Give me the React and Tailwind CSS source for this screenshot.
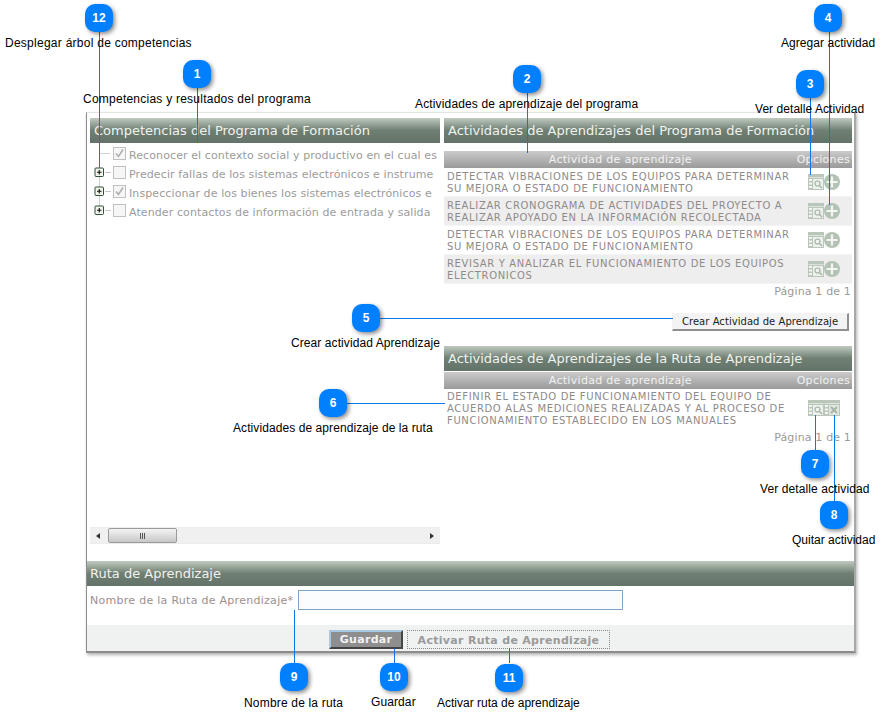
const verdana = "font-['DejaVu_Sans',Verdana,sans-serif]"

const programRows = [
  ['DETECTAR VIBRACIONES DE LOS EQUIPOS PARA DETERMINAR', 'SU MEJORA O ESTADO DE FUNCIONAMIENTO'],
  ['REALIZAR CRONOGRAMA DE ACTIVIDADES DEL PROYECTO A', 'REALIZAR APOYADO EN LA INFORMACIÓN RECOLECTADA'],
  ['DETECTAR VIBRACIONES DE LOS EQUIPOS PARA DETERMINAR', 'SU MEJORA O ESTADO DE FUNCIONAMIENTO'],
  ['REVISAR Y ANALIZAR EL FUNCIONAMIENTO DE LOS EQUIPOS', 'ELECTRONICOS'],
]

const competencias = [
  { text: 'Reconocer el contexto social y productivo en el cual es', checked: true, leaf: true },
  { text: 'Predecir fallas de los sistemas electrónicos e instrume', checked: false },
  { text: 'Inspeccionar de los bienes los sistemas electrónicos e', checked: true },
  { text: 'Atender contactos de información de entrada y salida', checked: false },
]

function DetailIcon() {
  return (
    <svg width="16" height="16" viewBox="0 0 16 16" className="shrink-0">
      <rect x="0" y="0" width="16" height="16" fill="#b9c6b9" />
      <rect x="0.5" y="3" width="15" height="0.8" fill="#e4eae4" />
      <rect x="1" y="5" width="3" height="2" fill="#f4f6f4" />
      <rect x="1" y="8.5" width="3" height="2" fill="#f4f6f4" />
      <rect x="1" y="12" width="3" height="2" fill="#f4f6f4" />
      <rect x="5" y="5" width="10" height="10" fill="#edf1ed" />
      <circle cx="9.5" cy="9.5" r="2.5" fill="none" stroke="#a4b4a4" strokeWidth="1.2" />
      <path d="M11.5 11.5l2.5 2.5" stroke="#a4b4a4" strokeWidth="1.4" />
    </svg>
  )
}

function PlusIcon() {
  return (
    <svg width="16" height="16" viewBox="0 0 16 16" className="shrink-0">
      <circle cx="8" cy="8" r="8" fill="#b4c2b4" />
      <path d="M8 2.5v11M2.5 8h11" stroke="#f4f6f4" strokeWidth="2.2" />
    </svg>
  )
}

function RemoveIcon() {
  return (
    <svg width="16" height="16" viewBox="0 0 16 16" className="shrink-0">
      <rect x="0" y="0" width="16" height="16" fill="#b9c6b9" />
      <rect x="0.5" y="3" width="15" height="0.8" fill="#e4eae4" />
      <rect x="1" y="5" width="3" height="2" fill="#f4f6f4" />
      <rect x="1" y="8.5" width="3" height="2" fill="#f4f6f4" />
      <rect x="1" y="12" width="3" height="2" fill="#f4f6f4" />
      <rect x="5" y="5" width="10" height="10" fill="#dfe6df" />
      <path d="M7 7l6 6M13 7l-6 6" stroke="#a4b4a4" strokeWidth="1.8" />
    </svg>
  )
}

function Checkbox({ checked }) {
  return (
    <span className="w-[13px] h-[13px] shrink-0 border border-[#c0c0c0] bg-[#f6f6f6] flex items-center justify-center">
      {checked && (
        <svg width="11" height="11" viewBox="0 0 11 11">
          <path d="M2 5.5l2.5 3L9 1.5" fill="none" stroke="#b0b0b0" strokeWidth="1.6" />
        </svg>
      )}
    </span>
  )
}

function TreeToggle() {
  return (
    <svg width="11" height="11" viewBox="0 0 11 11" className="relative shrink-0">
      <rect x="1" y="1" width="8.5" height="8.5" rx="1" fill="#f2f5ea" stroke="#2f4f3a" />
      <path d="M3 5.25h4.5M5.25 3v4.5" stroke="#111" strokeWidth="1.1" />
    </svg>
  )
}

function SectionHeader({ className = 'pl-[4px]', children }) {
  return (
    <div className={`h-[25px] shrink-0 bg-gradient-to-b from-[#c0cac0] via-[#6f7f72] to-[#64736a] text-[#f0f3f0] text-[13px] leading-[25px] whitespace-nowrap ${verdana} ${className}`}>
      {children}
    </div>
  )
}

function TableHeader() {
  return (
    <div className={`h-[17px] shrink-0 flex bg-gradient-to-b from-[#cbcbcb] to-[#9a9a9a] text-[#f2f2f2] text-[11px] leading-[18px] tracking-[0.3px] ${verdana}`}>
      <span className="w-[354px] text-center">Actividad de aprendizaje</span>
      <span className="flex-1 text-right pr-[2px]">Opciones</span>
    </div>
  )
}

function Pagination() {
  return (
    <div className={`text-right text-[11px] leading-[14px] text-[#9a9a9a] pr-[1px] mt-[1px] tracking-[0.15px] ${verdana}`}>Página 1 de 1</div>
  )
}

function Bubble({ className, children }) {
  return (
    <div className={`absolute w-[28px] h-[28px] rounded-[10px] bg-[#0080ff] text-white text-[12px] font-bold flex items-center justify-center shadow-[2px_2px_4px_rgba(0,0,0,0.45)] font-['Liberation_Sans',Arial,sans-serif] ${className}`}>
      {children}
    </div>
  )
}

function Label({ className, children }) {
  return (
    <div className={`absolute text-[12px] leading-[14px] text-black whitespace-nowrap font-['Liberation_Sans',Arial,sans-serif] ${className}`}>
      {children}
    </div>
  )
}

function Line({ className }) {
  return <div className={`absolute bg-[#0a78e8] ${className}`} />
}

export default function App() {
  return (
    <div className="relative w-[881px] h-[713px] bg-white overflow-hidden">
      <div className="pt-[112px] pl-[86px]">
        <div className="w-[770px] h-[541px] flex flex-col bg-white border-l border-l-[#8c8c8c] border-t border-t-[#e4e4e4] border-r-2 border-r-[#a8a8a8] border-b-2 border-b-[#8c8c8c] shadow-[1px_2px_3px_rgba(0,0,0,0.3)]">
          <div className="h-[448px] shrink-0 flex pt-[5px] pl-[3px] gap-[4px]">
            <div className="w-[350px] flex flex-col">
              <SectionHeader>Competencias del Programa de Formación</SectionHeader>
              <div className="relative mt-[1px] flex-1 flex flex-col">
                <span className="absolute left-[9px] top-[32px] h-[34px] w-px bg-[#cfcfcf]" />
                {competencias.map(c => (
                  <div key={c.text} className="h-[19px] flex items-center overflow-hidden">
                    <div className="w-[23px] pl-[4px] shrink-0 flex items-center">
                      {c.leaf ? <span className="ml-[6px] w-[10px] h-px bg-[#d4d4d4]" /> : <TreeToggle />}
                      {!c.leaf && <span className="w-[6px] h-px bg-[#c8c8c8]" />}
                    </div>
                    <Checkbox checked={c.checked} />
                    <span className={`ml-[3px] mt-[5px] text-[11px] tracking-[0.1px] text-[#9b9b9b] whitespace-nowrap ${verdana}`}>{c.text}</span>
                  </div>
                ))}
              </div>
              <div className="h-[17px] mb-[17px] flex items-center bg-[#f0f0f0] border-y border-[#ececec]">
                <svg width="18" height="10" viewBox="0 0 18 10" className="shrink-0"><path d="M10 2v6L6 5z" fill="#333" /></svg>
                <div className="w-[69px] h-[15px] rounded-[2px] border border-[#9a9a9a] bg-gradient-to-b from-[#f4f4f4] to-[#c8c8c8] flex items-center justify-center gap-px">
                  <span className="w-px h-[6px] bg-[#555]" /><span className="w-px h-[6px] bg-[#555]" /><span className="w-px h-[6px] bg-[#555]" />
                </div>
                <div className="flex-1" />
                <svg width="14" height="10" viewBox="0 0 14 10" className="shrink-0"><path d="M4 2v6l4-3z" fill="#333" /></svg>
              </div>
            </div>
            <div className="w-[408px] flex flex-col">
              <SectionHeader>Actividades de Aprendizajes del Programa de Formación</SectionHeader>
              <div className="h-[8px] shrink-0" />
              <TableHeader />
              {programRows.map((row, i) => (
                <div key={i} className={`h-[29px] flex items-center justify-between pl-[3px] pr-[12px] border-b border-[#f4f4f4] ${i % 2 === 1 ? 'bg-[#eeeeee]' : 'bg-white'}`}>
                  <div className={`pt-[1px] text-[10px] leading-[12px] text-[#8f8a8a] tracking-[0.65px] whitespace-nowrap ${verdana}`}>
                    <div>{row[0]}</div>
                    <div>{row[1]}</div>
                  </div>
                  <div className="flex">
                    <DetailIcon />
                    <PlusIcon />
                  </div>
                </div>
              ))}
              <Pagination />
              <div className="flex justify-end pr-[3px] mt-[14px]">
                <button className={`w-[177px] h-[18px] bg-[#f3f3f3] border-r-2 border-b-2 border-[#8f8f8f] border-t border-l border-t-[#f4f4f4] border-l-[#f4f4f4] text-[10px] text-[#222] tracking-[0.05px] leading-[15px] ${verdana}`}>
                  Crear Actividad de Aprendizaje
                </button>
              </div>
              <div className="h-[15px] shrink-0" />
              <SectionHeader>Actividades de Aprendizajes de la Ruta de Aprendizaje</SectionHeader>
              <div className="h-px shrink-0" />
              <TableHeader />
              <div className="flex justify-between pl-[3px] pr-[12px] pt-[2px]">
                <div className={`text-[10px] leading-[12px] text-[#8f8a8a] tracking-[0.65px] whitespace-nowrap ${verdana}`}>
                  <div>DEFINIR EL ESTADO DE FUNCIONAMIENTO DEL EQUIPO DE</div>
                  <div>ACUERDO ALAS MEDICIONES REALIZADAS Y AL PROCESO DE</div>
                  <div>FUNCIONAMIENTO ESTABLECIDO EN LOS MANUALES</div>
                </div>
                <div className="flex mt-[9px] h-[16px]">
                  <DetailIcon />
                  <RemoveIcon />
                </div>
              </div>
              <div className="mt-[3px]"><Pagination /></div>
            </div>
          </div>
          <SectionHeader className="pl-[3px]">Ruta de Aprendizaje</SectionHeader>
          <div className="h-[39px] shrink-0 flex items-start pt-[4px] pl-[3px]">
            <span className={`pt-[1px] text-[11px] leading-[20px] text-[#9b9090] tracking-[0.28px] whitespace-nowrap ${verdana}`}>Nombre de la Ruta de Aprendizaje*</span>
            <input className="ml-[5px] w-[325px] h-[20px] bg-[#fbfcfd] border border-[#7fa3c7] outline-none" />
          </div>
          <div className="flex-1 bg-[#f0f1f1] flex items-start pt-[5px] pl-[242px] gap-[4px]">
            <button className={`w-[74px] h-[19px] pt-[1px] bg-[#8e8e8e] border-2 border-t-[#a9c8e4] border-l-[#a9c8e4] border-r-[#444] border-b-[#444] text-[#f2f2f2] text-[11px] font-bold leading-[14px] tracking-[0.3px] ${verdana}`}>Guardar</button>
            <button className={`w-[203px] h-[19px] pt-[1px] bg-[#f0f1f1] border border-dotted border-[#888] text-[#9a9a9a] text-[11px] font-bold leading-[15px] tracking-[0.3px] ${verdana}`}>Activar Ruta de Aprendizaje</button>
          </div>
        </div>
      </div>

      <Line className="left-[99px] top-[32px] w-px h-[136px]" />
      <Line className="left-[197px] top-[88px] w-px h-[55px]" />
      <Line className="left-[527px] top-[93px] w-px h-[60px]" />
      <Line className="left-[810px] top-[98px] w-px h-[77px]" />
      <Line className="left-[829px] top-[32px] w-px h-[173px]" />
      <Line className="left-[380px] top-[318px] w-[293px] h-px" />
      <Line className="left-[347px] top-[403px] w-[98px] h-px" />
      <Line className="left-[815px] top-[415px] w-px h-[35px]" />
      <Line className="left-[834px] top-[415px] w-px h-[86px]" />
      <Line className="left-[294px] top-[610px] w-px h-[53px]" />
      <Line className="left-[394px] top-[649px] w-px h-[14px]" />
      <Line className="left-[509px] top-[648px] w-px h-[15px]" />

      <Bubble className="left-[85px] top-[4px]">12</Bubble>
      <Bubble className="left-[183px] top-[60px]">1</Bubble>
      <Bubble className="left-[513px] top-[65px]">2</Bubble>
      <Bubble className="left-[796px] top-[70px]">3</Bubble>
      <Bubble className="left-[814px] top-[4px]">4</Bubble>
      <Bubble className="left-[352px] top-[304px]">5</Bubble>
      <Bubble className="left-[319px] top-[389px]">6</Bubble>
      <Bubble className="left-[801px] top-[450px]">7</Bubble>
      <Bubble className="left-[820px] top-[501px]">8</Bubble>
      <Bubble className="left-[280px] top-[663px]">9</Bubble>
      <Bubble className="left-[380px] top-[663px]">10</Bubble>
      <Bubble className="left-[495px] top-[664px]">11</Bubble>

      <Label className="left-[5px] top-[36px] tracking-[0.26px]">Desplegar árbol de competencias</Label>
      <Label className="left-[83px] top-[92px] tracking-[0.24px]">Competencias y resultados del programa</Label>
      <Label className="left-[415px] top-[97px] tracking-[0.15px]">Actividades de aprendizaje del programa</Label>
      <Label className="left-[755px] top-[102px] tracking-[0.05px]">Ver detalle Actividad</Label>
      <Label className="left-[781px] top-[36px] tracking-[0.05px]">Agregar actividad</Label>
      <Label className="left-[291px] top-[336px] tracking-[0.08px]">Crear actividad Aprendizaje</Label>
      <Label className="left-[233px] top-[421px] tracking-[0.08px]">Actividades de aprendizaje de la ruta</Label>
      <Label className="left-[760px] top-[482px] tracking-[0.1px]">Ver detalle actividad</Label>
      <Label className="left-[792px] top-[533px]">Quitar actividad</Label>
      <Label className="left-[244px] top-[696px] tracking-[0.18px]">Nombre de la ruta</Label>
      <Label className="left-[371px] top-[695px] tracking-[0.1px]">Guardar</Label>
      <Label className="left-[437px] top-[696px]">Activar ruta de aprendizaje</Label>
    </div>
  )
}
